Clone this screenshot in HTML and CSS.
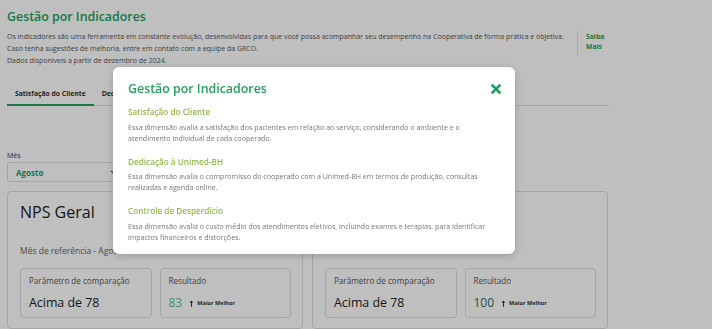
FILE: index.html
```html
<!DOCTYPE html>
<html lang="pt-BR">

<head>
  <meta charset="UTF-8">
  <meta name="viewport" content="width=device-width, initial-scale=1.0">
  <title>Gestão por Indicadores</title>
  <link rel="stylesheet" href="styles.css">
</head>

<body>
  <div class="page">
    <h1 class="page-title">Gestão por Indicadores</h1>

    <div class="intro">
      <div class="intro-text">
        <p>Os indicadores são uma ferramenta em constante evolução, desenvolvidas para que você possa acompanhar seu desempenho na Cooperativa de forma prática e objetiva.<br>Caso tenha sugestões de melhoria, entre em contato com a equipe da GRCO.</p>
        <p>Dados disponíveis a partir de dezembro de 2024.</p>
      </div>
      <a class="saiba-mais" href="#">Saiba<br>Mais</a>
    </div>

    <div class="tabs">
      <div class="tab active">Satisfação do Cliente</div>
      <div class="tab">Dedicação à Unimed-BH</div>
      <div class="tab">Controle de Desperdício</div>
    </div>

    <div class="filter">
      <label class="filter-label">Mês</label>
      <div class="select">
        <span>Agosto</span>
        <svg width="7" height="5" viewBox="0 0 7 5"><polyline points="1,1 3.5,3.5 6,1" fill="none" stroke="#666" stroke-width="1.2"/></svg>
      </div>
    </div>

    <div class="cards">
      <div class="card">
        <h2 class="card-title">NPS Geral</h2>
        <div class="card-ref">Mês de referência - Agosto</div>
        <div class="metrics">
          <div class="metric">
            <div class="metric-label">Parâmetro de comparação</div>
            <div class="metric-value">Acima de 78</div>
          </div>
          <div class="metric">
            <div class="metric-label">Resultado</div>
            <div class="metric-value">
              <span class="result good">83</span>
              <span class="trend"><svg width="5" height="7" viewBox="0 0 5 7"><path d="M2.5 0.5 L0.6 2.8 H2 V6.8 H3 V2.8 H4.4 Z" fill="#333"/></svg>Maior Melhor</span>
            </div>
          </div>
        </div>
      </div>

      <div class="card">
        <h2 class="card-title">NPS</h2>
        <div class="card-ref"></div>
        <div class="metrics">
          <div class="metric">
            <div class="metric-label">Parâmetro de comparação</div>
            <div class="metric-value">Acima de 78</div>
          </div>
          <div class="metric">
            <div class="metric-label">Resultado</div>
            <div class="metric-value">
              <span class="result top">100</span>
              <span class="trend"><svg width="5" height="7" viewBox="0 0 5 7"><path d="M2.5 0.5 L0.6 2.8 H2 V6.8 H3 V2.8 H4.4 Z" fill="#333"/></svg>Maior Melhor</span>
            </div>
          </div>
        </div>
      </div>
    </div>
  </div>

  <div class="overlay">
    <div class="modal">
      <div class="modal-header">
        <h2 class="modal-title">Gestão por Indicadores</h2>
        <button class="close" aria-label="Fechar">
          <svg width="10" height="10" viewBox="0 0 10 10"><path d="M1.5 1.5 L8.5 8.5 M8.5 1.5 L1.5 8.5" stroke="#1f9d5b" stroke-width="2.6" stroke-linecap="square"/></svg>
        </button>
      </div>

      <div class="dimension">
        <h3>Satisfação do Cliente</h3>
        <p>Essa dimensão avalia a satisfação dos pacientes em relação ao serviço, considerando o ambiente e o atendimento individual de cada cooperado.</p>
      </div>

      <div class="dimension">
        <h3>Dedicação à Unimed-BH</h3>
        <p>Essa dimensão avalia o compromisso do cooperado com a Unimed-BH em termos de produção, consultas realizadas e agenda online.</p>
      </div>

      <div class="dimension">
        <h3>Controle de Desperdício</h3>
        <p>Essa dimensão avalia o custo médio dos atendimentos eletivos, incluindo exames e terapias, para identificar impactos financeiros e distorções.</p>
      </div>
    </div>
  </div>
</body>

</html>
```

FILE: styles.css
```css
body {
  font-family: 'Open Sans', 'Liberation Sans', sans-serif;
  background-color: #fff;
  color: #333;
  margin: 0;
}

.page {
  padding: 6px 7px;
  width: 602px;
}

.page-title {
  font-size: 12.4px;
  font-weight: 600;
  line-height: 22px;
  color: #24a05c;
  margin: 0;
}

.intro {
  display: flex;
  align-items: flex-start;
  margin-top: 3px;
}

.intro-text {
  width: 566px;
}

.intro-text p {
  margin: 0;
  font-size: 7px;
  line-height: 12px;
  color: #555;
}

.saiba-mais {
  display: block;
  margin-left: 4px;
  margin-top: 0;
  padding: 1px 0 3px 8px;
  border-left: 1px solid #ddd;
  font-size: 6.8px;
  font-weight: 700;
  line-height: 10px;
  color: #24a05c;
  text-decoration: none;
}

.tabs {
  display: flex;
  margin-top: 14px;
  border-bottom: 1px solid #ddd;
}

.tab {
  padding: 7px 8px 4px;
  font-size: 6.8px;
  font-weight: 700;
  line-height: 12px;
  color: #333;
  border-bottom: 2px solid transparent;
  margin-bottom: -1px;
}

.tab.active {
  border-bottom-color: #24a05c;
}

.filter {
  margin-top: 44px;
}

.filter-label {
  display: block;
  font-size: 7px;
  line-height: 11px;
  color: #333;
}

.select {
  display: flex;
  align-items: center;
  justify-content: space-between;
  width: 101px;
  height: 18px;
  margin-top: 1px;
  padding: 0 5px 0 8px;
  border: 1px solid #ddd;
  border-radius: 3px;
  font-size: 8px;
  font-weight: 700;
  color: #24a05c;
}

.cards {
  display: flex;
  gap: 9px;
  margin-top: 9px;
}

.card {
  width: 271px;
  padding: 9px 11px 10px 12px;
  border: 1px solid #ddd;
  border-radius: 4px;
}

.card-title {
  font-size: 16px;
  font-weight: 500;
  line-height: 22px;
  margin: 0;
  color: #222;
}

.card-ref {
  height: 12px;
  font-size: 8.5px;
  line-height: 12px;
  color: #666;
  margin-top: 22px;
}

.metrics {
  display: flex;
  gap: 8px;
  margin-top: 11px;
}

.metric {
  flex: 1;
  height: 48px;
  padding: 0 8px;
  border: 1px solid #ddd;
  border-radius: 4px;
}

.metric-label {
  font-size: 8.1px;
  line-height: 12px;
  color: #555;
  margin-top: 6px;
}

.metric-value {
  display: flex;
  align-items: center;
  font-size: 12.4px;
  font-weight: 500;
  line-height: 20px;
  color: #222;
  margin-top: 6px;
}

.result {
  font-size: 12px;
}

.result.good {
  color: #55c39b;
}

.result.top {
  color: #1f6e66;
}

.trend {
  display: flex;
  align-items: center;
  gap: 3px;
  margin-left: 7px;
  font-size: 5.6px;
  font-weight: 700;
  color: #333;
}

.overlay {
  position: fixed;
  inset: 0;
  background-color: rgba(0, 0, 0, 0.25);
}

.modal {
  position: absolute;
  left: 113px;
  top: 67px;
  width: 372px;
  padding: 12px 15px 11px;
  background-color: #fff;
  border-radius: 6px;
  box-shadow: 0 2px 8px rgba(0, 0, 0, 0.2);
}

.modal-header {
  display: flex;
  align-items: center;
  justify-content: space-between;
}

.modal-title {
  font-size: 12.4px;
  font-weight: 600;
  line-height: 20px;
  color: #24a05c;
  margin: 0;
}

.close {
  border: none;
  background: none;
  padding: 0;
  margin-right: -1px;
  display: flex;
  cursor: pointer;
}

.dimension {
  margin-top: 7px;
}

.dimension + .dimension {
  margin-top: 12px;
}

.dimension h3 {
  margin: 0;
  font-size: 8.2px;
  font-weight: 600;
  line-height: 12px;
  color: #95b64f;
}

.dimension p {
  margin: 3.5px 0 0;
  font-size: 7.1px;
  line-height: 11px;
  color: #777;
}
```
